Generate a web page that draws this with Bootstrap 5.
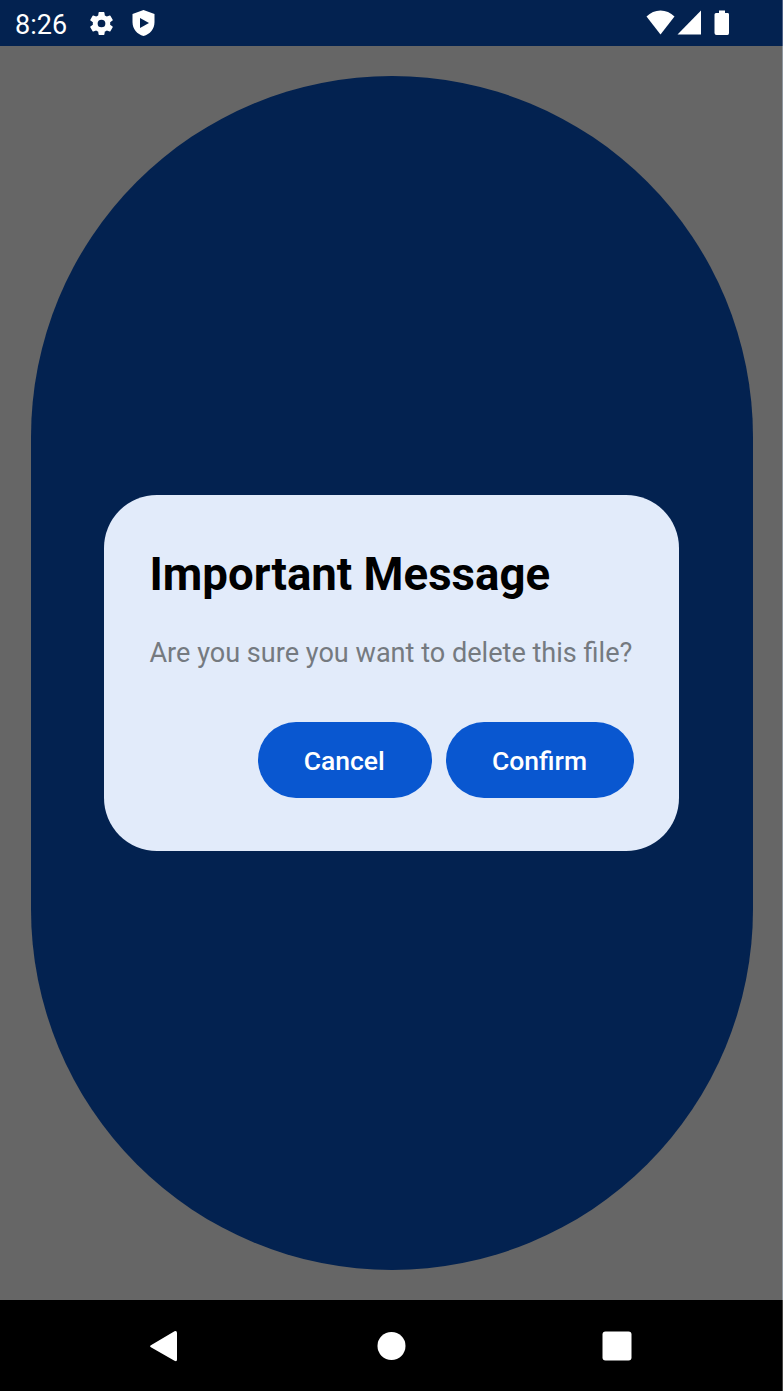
<!DOCTYPE html>
<html lang="en">
<head>
<meta charset="utf-8">
<meta name="viewport" content="width=device-width, initial-scale=1">
<title>Important Message</title>
<link href="https://cdn.jsdelivr.net/npm/bootstrap@5.3.0/dist/css/bootstrap.min.css" rel="stylesheet">
<style>
  body { font-family: Roboto, sans-serif; background: #666; }
  .screen { height: 1391px; width: 783px; }
  .screen-edge { width: 1px; background: linear-gradient(#4d6288 46px, #8f979f 46px 1300px, #444 1300px); }
  .status-bar { height: 46px; background: #032250; padding-left: 15px; padding-right: 52px; }
  .clock { font-size: 27px; line-height: 46px; width: 52px; margin-right: 20px; padding-top: 3px; }
  .stage { padding: 30px 29.5px 30px 30.5px; }
  .pill { background: #032250; border-radius: 361px; }
  .dialog { width: 575.5px; height: 356px; border-radius: 53px; background: #e2ebfa; padding: 45.7px 45.5px 45.7px 45.7px; }
  .dialog-title { font-size: 45.6px; line-height: 66px; font-weight: 700; color: #000; padding-top: 1px; }
  .dialog-text { font-size: 27.1px; line-height: 38px; margin-top: 26px; color: #757a80; white-space: nowrap; }
  .dialog-actions { gap: 14.5px; margin-top: 50px; }
  .action { --bs-btn-bg: #0957d0; --bs-btn-color: #fff; --bs-btn-border-width: 0; --bs-btn-font-size: 26.5px; --bs-btn-font-weight: 500; height: 76px; padding: 2px 1px 0 0; }
  .action-cancel { width: 174px; }
  .action-confirm { width: 187.5px; }
  .nav-keys { height: 91px; background: #000; }
</style>
</head>
<body>
<div class="screen d-flex overflow-hidden">
  <div class="d-flex flex-column flex-grow-1">
    <header class="status-bar d-flex align-items-center text-white">
      <span class="clock">8:26</span>
      <svg width="29" height="29" viewBox="0 0 24 24" fill="#fff"><path d="M19.14 12.94c.04-.3.06-.61.06-.94s-.02-.64-.07-.94l2.03-1.58a.49.49 0 0 0 .12-.61l-1.92-3.32a.488.488 0 0 0-.59-.22l-2.39.96c-.5-.38-1.03-.7-1.62-.94L14.4 2.81a.484.484 0 0 0-.48-.41h-3.84c-.24 0-.43.17-.47.41l-.36 2.54c-.59.24-1.13.57-1.62.94l-2.39-.96a.488.488 0 0 0-.59.22L2.74 8.87c-.12.21-.08.47.12.61l2.03 1.58c-.05.3-.09.63-.09.94s.02.64.07.94l-2.03 1.58a.49.49 0 0 0-.12.61l1.92 3.32c.12.22.37.29.59.22l2.39-.96c.5.38 1.03.7 1.62.94l.36 2.54c.05.24.24.41.48.41h3.84c.24 0 .44-.17.47-.41l.36-2.54c.59-.24 1.13-.56 1.62-.94l2.39.96c.22.08.47 0 .59-.22l1.92-3.32a.49.49 0 0 0-.12-.61zM12 15.2A3.2 3.2 0 1 1 12 8.800a3.200 3.200 0 0 1 0 6.400z"/></svg>
      <svg class="ms-3" width="24" height="28" viewBox="0 0 24 28"><path d="M11.500 1L22.500 5V13C22.500 20 18 25.300 11.500 27C5 25.300 .5 20 .5 13V5Z" fill="#fff"/><path d="M8 9L17 14L8 19Z" fill="#032250"/></svg>
      <div class="d-flex align-items-center ms-auto">
        <svg width="29" height="26" viewBox="0 0 29 26"><path d="M.5 6.500Q6.500 .5 14.500 .5T28.500 6.500L14.500 24.500Z" fill="#fff"/></svg>
        <svg width="25" height="26" viewBox="0 0 25 26" style="margin-left:2px"><path d="M.5 24.500L24 .5V24.500Z" fill="#fff"/></svg>
        <svg width="16" height="26" viewBox="0 0 16 26" style="margin-left:12px"><path d="M5 .5H11V3H14Q15 3 15 4.500V23Q15 25 13.500 25H2.500Q.5 25 .5 23V4.500Q.5 3 2 3H5Z" fill="#fff"/></svg>
      </div>
    </header>
    <main class="stage flex-grow-1 d-flex">
      <div class="pill flex-grow-1 d-flex align-items-center justify-content-center">
        <section class="dialog" role="dialog" aria-labelledby="title">
          <h1 class="dialog-title mb-0" id="title">Important Message</h1>
          <p class="dialog-text mb-0">Are you sure you want to delete this file?</p>
          <div class="dialog-actions d-flex justify-content-end">
            <button type="button" class="btn action action-cancel rounded-pill">Cancel</button>
            <button type="button" class="btn action action-confirm rounded-pill">Confirm</button>
          </div>
        </section>
      </div>
    </main>
    <nav class="nav-keys d-flex align-items-center justify-content-center">
      <svg width="483" height="34" viewBox="0 0 483 34" fill="#fff"><path d="M.9 16.200L24.500 2.300Q27 1.500 27 4V30.500Q27 33 24.500 31.700L.9 18.300Q-.7 17 .9 16.200Z"/><circle cx="241.500" cy="17" r="14"/><rect x="452.500" y="2.500" width="29" height="29" rx="3"/></svg>
    </nav>
  </div>
  <div class="screen-edge flex-shrink-0"></div>
</div>
<script src="https://cdn.jsdelivr.net/npm/bootstrap@5.3.0/dist/js/bootstrap.bundle.min.js"></script>
</body>
</html>
